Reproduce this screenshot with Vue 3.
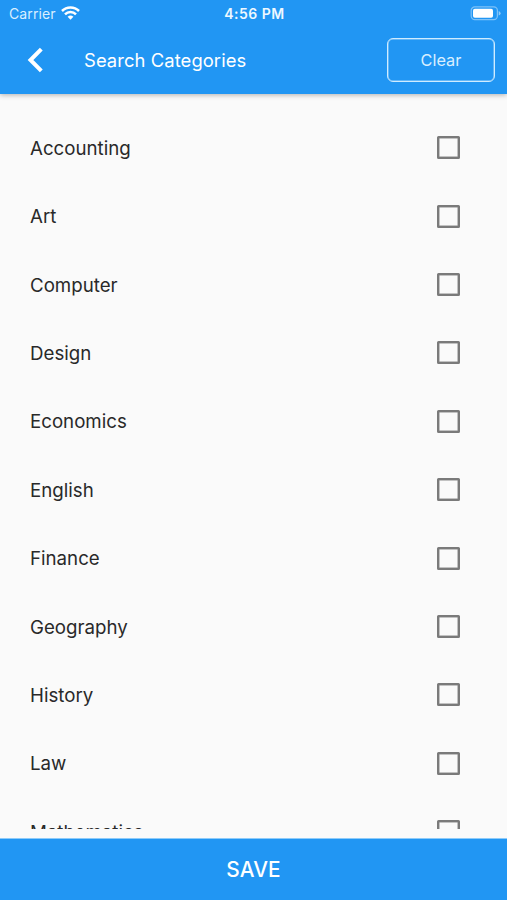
<script setup>
import { ref } from 'vue'

const names = ['Accounting', 'Art', 'Computer', 'Design', 'Economics', 'English', 'Finance', 'Geography', 'History', 'Law', 'Mathematics']
const selected = ref([])
</script>

<template>
  <div class="screen">
    <header class="top">
      <div class="status">
        <div class="carrier">
          <span>Carrier</span>
          <svg class="wifi" width="19" height="14" viewBox="0 0 19 14">
            <g fill="none" stroke="#fff" stroke-width="2.5">
              <path d="M1 5A12 12 0 0 1 18 5" />
              <path d="M4 8.3A7.7 7.7 0 0 1 15 8.3" />
            </g>
            <path d="M6.6 10.8A4.4 4.4 0 0 1 12.4 10.8L9.5 13.8Z" fill="#fff" />
          </svg>
        </div>
        <span class="time">4:56 PM</span>
        <svg class="battery" width="31" height="15" viewBox="0 0 31 15">
          <rect x="1.2" y="0.9" width="26.2" height="12.8" rx="3.6" fill="none" stroke="#fff" stroke-opacity=".42" stroke-width="1.2" />
          <rect x="3" y="2.8" width="20" height="9" rx="1.8" fill="#fff" />
          <path d="M28.7 5Q30.6 5.7 30.6 7.3T28.7 9.6Z" fill="#fff" fill-opacity=".5" />
        </svg>
      </div>
      <div class="bar">
        <button class="back" aria-label="Back">
          <svg width="17" height="26" viewBox="0 0 17 26">
            <path d="M14.3 2.2L3.5 13L14.3 23.8" fill="none" stroke="#fff" stroke-width="4" />
          </svg>
        </button>
        <h1>Search Categories</h1>
        <button class="clear" @click="selected = []">Clear</button>
      </div>
    </header>
    <main class="list">
      <label v-for="name in names" :key="name" class="row">
        <span>{{ name }}</span>
        <input v-model="selected" type="checkbox" :value="name" />
      </label>
    </main>
    <button class="save">SAVE</button>
  </div>
</template>

<style>
body {
  margin: 0;
  background: #fafafa;
}
</style>

<style scoped>
.screen {
  height: 900px;
  display: flex;
  flex-direction: column;
  overflow: hidden;
  background: #fafafa;
  font-family: Inter, "Liberation Sans", sans-serif;
}
button {
  margin: 0;
  padding: 0;
  border: 0;
  background: none;
  color: #fff;
  font-family: inherit;
}
.top {
  position: relative;
  flex: none;
  box-sizing: border-box;
  height: 94px;
  background: #2196f3;
  color: #fff;
  box-shadow: 0 1px 5px rgba(0, 0, 0, 0.3);
}
.status {
  height: 27px;
  padding: 0 6px 0 9px;
  display: grid;
  grid-template-columns: 1fr auto 1fr;
  align-items: center;
  font-size: 14px;
}
.carrier {
  display: flex;
  align-items: center;
  gap: 5px;
  color: #d9efff;
  letter-spacing: 0.1px;
}
.wifi {
  margin-top: -2px;
}
.time {
  font-size: 14px;
  font-weight: 600;
  letter-spacing: 0.5px;
  margin-left: -1px;
  color: #eef8ff;
}
.battery {
  justify-self: end;
}
.bar {
  height: 65px;
  padding: 0 12px 0 27px;
  display: flex;
  align-items: center;
}
.back {
  width: 57px;
  height: 26px;
  display: flex;
}
h1 {
  flex: 1;
  margin: 0;
  font-size: 18.4px;
  font-weight: 400;
  letter-spacing: 0.08px;
}
.clear {
  box-sizing: border-box;
  width: 108px;
  height: 44px;
  border: 1px solid #d0ecff;
  border-radius: 6px;
  box-shadow: inset 0 0 0 0.5px #a5d8ff;
  font-size: 16.3px;
  color: #d9efff;
}
.list {
  flex: none;
  box-sizing: border-box;
  height: 735px;
  padding-top: 19.5px;
  overflow: hidden;
  margin-bottom: 9px;
}
.row {
  height: 68.42px;
  padding: 0 47px 0 30px;
  display: flex;
  align-items: center;
  justify-content: space-between;
  font-size: 18.7px;
  color: #292929;
}
.row span {
  padding-top: 1px;
}
.row input {
  appearance: none;
  box-sizing: border-box;
  width: 23px;
  height: 23px;
  margin: 0;
  border: 2px solid #7a7a7a;
  border-radius: 1.5px;
  box-shadow: inset 0 0 0 0.5px #8a8a8a;
}
.row input:checked {
  background: #2196f3;
  border-color: #2196f3;
}
.save {
  flex: 1;
  border-top: 1px solid #8ccbfa;
  background: #2196f3;
  font-size: 20.8px;
  font-weight: 500;
  letter-spacing: 0.1px;
}
</style>
